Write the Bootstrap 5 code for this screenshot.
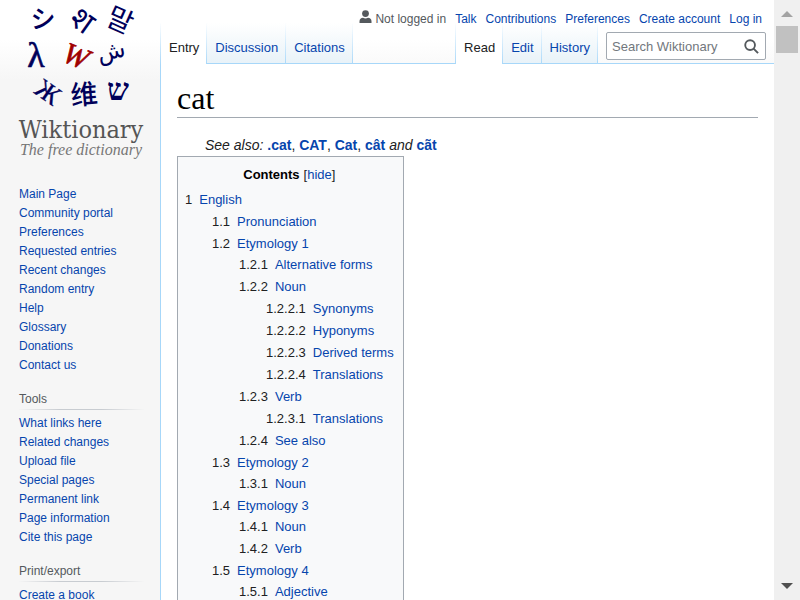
<!DOCTYPE html>
<html lang="en">
<head>
<meta charset="utf-8">
<meta name="viewport" content="width=device-width, initial-scale=1">
<title>cat - Wiktionary</title>
<link href="https://cdn.jsdelivr.net/npm/bootstrap@5.3.0/dist/css/bootstrap.min.css" rel="stylesheet">
<style>
body{font-family:"Liberation Sans",Arial,sans-serif;font-size:14px;line-height:22px;color:#202122;background:#f6f6f6}
a{color:#0645ad;text-decoration:none}
a:hover{text-decoration:underline}
ul{list-style:none;margin:0;padding:0}
.page-area{background:linear-gradient(#fff 40px,#f6f6f6 80px) top/100% 80px no-repeat}
.side{width:160px;font-size:12px;line-height:19px}
.side .logo-link{display:block;height:160px}
.side nav{padding:0 16px 0 19px}
.side .first-nav{margin-top:25px}
.side h2{font-size:12px;line-height:19px;color:#54595d;margin:15px 0 4px;border-bottom:1px solid;border-image:linear-gradient(to right,rgba(200,204,209,0),#c8ccd1 33%,#c8ccd1 66%,rgba(200,204,209,0)) 1}
.personal{font-size:12px;line-height:14px;height:23px;padding:12px 12px 0 0;gap:9px;color:#54595d}
.tabs{height:41px;font-size:13px;line-height:16px;border-left:1px solid;border-image:linear-gradient(#fff,#a7d7f9) 1}
.tabs li{border-right:1px solid;border-image:linear-gradient(#fff,#a7d7f9) 1;background:linear-gradient(#fff,#e8f2f8);padding:17px 7px 0 8px}
.tabs li.current{background:#fff}
.tabs li.current a{color:#202122}
.tabs li:not(.current),.tabs .fill{box-shadow:inset 0 -1px #a7d7f9}
.tabs .fill-mid{border-right:1px solid;border-image:linear-gradient(#fff,#a7d7f9) 1}
.search{width:160px;height:28px;margin:9px 8px 0;border:1px solid #a2a9b1;border-radius:2px;background:#fff}
.search input{font-size:13px;line-height:16px;padding:2px 0 0 5px;color:#202122;min-width:0}
.search input::placeholder{color:#72777d;opacity:1}
.search button{width:28px}
.content{background:#fff;border-left:1px solid #a7d7f9;padding:16px 16px 0}
.content h1{font-family:"Liberation Serif",Georgia,serif;font-size:32px;line-height:36px;color:#000;border-bottom:1px solid #a2a9b1;padding-bottom:1px;margin:0 0 17px}
.see{padding-left:28px;line-height:21px}
.contents-box{width:max-content;border:1px solid #a2a9b1;background:#f8f9fa;font-size:13px;padding:7px 9px 0 7px}
.contents-box h2{font-size:13px;line-height:22px;color:#000;margin:0}
.contents-box .tree{margin-top:3px}
.tree ul{padding-left:27px}
.tree ul ul{margin-top:-1px}
.tree ul ul ul{margin-top:0}
.tree span{margin-right:7px}
.scroller{width:26px;background:#f0f0f0}
.scroller .thumb{height:27px;margin:0 2px;background:#c1c1c1}
</style>
<script src="https://cdn.jsdelivr.net/npm/bootstrap@5.3.0/dist/js/bootstrap.bundle.min.js"></script>
</head>
<body class="d-flex vh-100 overflow-hidden">
<div class="page-area d-flex flex-grow-1 overflow-hidden">
  <aside class="side flex-shrink-0">
    <a class="logo-link" href="#" aria-label="Wiktionary, the free dictionary">
      <svg width="160" height="160" viewBox="0 0 160 160" text-anchor="middle" fill="#00005a" overflow="visible">
        <g font-family="Noto Sans CJK JP, sans-serif" font-weight="500">
          <text x="0" y="9" font-size="25" transform="translate(43 19)">シ</text>
          <text x="0" y="10" font-size="32" font-family="Noto Sans, sans-serif" font-weight="400" transform="translate(82 21) rotate(35)">श</text>
          <text x="0" y="10" font-size="28" font-family="Noto Sans CJK KR, sans-serif" font-weight="400" transform="translate(120 20) rotate(24)">말</text>
          <text x="0" y="10" font-size="27" font-family="Noto Sans CJK SC, sans-serif" transform="translate(84 94) rotate(-5)">维</text>
        </g>
        <g font-family="Liberation Serif, serif">
          <text x="0" y="11" font-size="36" stroke="#00005a" stroke-width=".6" transform="translate(36 56)">λ</text>
          <text x="0" y="10" font-size="30" font-style="italic" fill="#a00000" stroke="#a00000" stroke-width=".7" transform="translate(76 56) rotate(22)">W</text>
          <text x="0" y="9" font-size="27" stroke="#00005a" stroke-width=".3" transform="translate(48 92) rotate(35)">Ж</text>
          <text x="118" y="100" font-size="31" font-weight="700">ש</text>
        </g>
        <text x="0" y="4" font-size="23" font-family="DejaVu Sans, sans-serif" transform="translate(112 55) rotate(-12)">ش</text>
        <text x="81" y="138" font-size="25" font-family="DejaVu Serif Condensed, DejaVu Serif, serif" fill="#555">Wiktionary</text>
        <text x="81" y="155" font-size="16" font-style="italic" font-family="Liberation Serif, serif" fill="#777">The free dictionary</text>
      </svg>
    </a>
    <nav class="first-nav" aria-label="Navigation"><ul>
      <li><a href="#">Main Page</a></li><li><a href="#">Community portal</a></li><li><a href="#">Preferences</a></li><li><a href="#">Requested entries</a></li><li><a href="#">Recent changes</a></li><li><a href="#">Random entry</a></li><li><a href="#">Help</a></li><li><a href="#">Glossary</a></li><li><a href="#">Donations</a></li><li><a href="#">Contact us</a></li>
    </ul></nav>
    <nav aria-labelledby="tools"><h2 id="tools" class="fw-normal">Tools</h2><ul>
      <li><a href="#">What links here</a></li><li><a href="#">Related changes</a></li><li><a href="#">Upload file</a></li><li><a href="#">Special pages</a></li><li><a href="#">Permanent link</a></li><li><a href="#">Page information</a></li><li><a href="#">Cite this page</a></li>
    </ul></nav>
    <nav aria-labelledby="print"><h2 id="print" class="fw-normal">Print/export</h2><ul><li><a href="#">Create a book</a></li></ul></nav>
  </aside>
  <div class="d-flex flex-column flex-grow-1 overflow-hidden">
    <header>
      <ul class="personal d-flex justify-content-end text-nowrap">
        <li class="d-flex"><svg width="16" height="14" viewBox="0 0 16 14" fill="#54595d" aria-hidden="true" overflow="visible"><circle cx="6.500" cy="1.600" r="3.400"/><path d="M.5 11V9.200C.5 7 2 5.800 4 5.800c1.500 1 3.500 1 5 0 2 0 3.500 1.200 3.500 3.400V11z"/></svg>Not logged in</li>
        <li><a href="#">Talk</a></li><li><a href="#">Contributions</a></li><li><a href="#">Preferences</a></li><li><a href="#">Create account</a></li><li><a href="#">Log in</a></li>
      </ul>
      <div class="tabs d-flex text-nowrap">
        <ul class="d-flex"><li class="current"><a href="#">Entry</a></li><li><a href="#">Discussion</a></li><li><a href="#">Citations</a></li></ul>
        <div class="fill fill-mid flex-grow-1"></div>
        <ul class="d-flex"><li class="current"><a href="#">Read</a></li><li><a href="#">Edit</a></li><li><a href="#">History</a></li></ul>
        <div class="fill">
          <form class="search d-flex">
            <input class="form-control border-0 bg-transparent shadow-none" type="search" placeholder="Search Wiktionary" aria-label="Search Wiktionary">
            <button class="btn border-0 p-0 d-flex align-items-center justify-content-center flex-shrink-0" type="button" aria-label="Search"><svg width="15" height="15" viewBox="0 0 16 16" fill="none" stroke="#54595d" stroke-width="2"><circle cx="6.500" cy="6.500" r="5.200"/><path d="M10.200 10.200 15 15"/></svg></button>
          </form>
        </div>
      </div>
    </header>
    <main class="content flex-grow-1 overflow-hidden">
      <h1 class="fw-normal">cat</h1>
      <div class="see"><i>See also:</i> <a class="fw-bold" href="#">.cat</a>, <a class="fw-bold" href="#">CAT</a>, <a class="fw-bold" href="#">Cat</a>, <a class="fw-bold" href="#">cât</a> <i>and</i> <a class="fw-bold" href="#">cãt</a></div>
      <nav class="contents-box" aria-labelledby="toc">
        <div class="d-flex justify-content-center gap-1"><h2 id="toc" class="fw-bold">Contents</h2><div>[<a href="#">hide</a>]</div></div>
        <ul class="tree ps-0">
          <li><span>1</span><a href="#">English</a>
            <ul>
              <li><span>1.1</span><a href="#">Pronunciation</a></li>
              <li><span>1.2</span><a href="#">Etymology 1</a>
                <ul>
                  <li><span>1.2.1</span><a href="#">Alternative forms</a></li>
                  <li><span>1.2.2</span><a href="#">Noun</a>
                    <ul>
                      <li><span>1.2.2.1</span><a href="#">Synonyms</a></li>
                      <li><span>1.2.2.2</span><a href="#">Hyponyms</a></li>
                      <li><span>1.2.2.3</span><a href="#">Derived terms</a></li>
                      <li><span>1.2.2.4</span><a href="#">Translations</a></li>
                    </ul></li>
                  <li><span>1.2.3</span><a href="#">Verb</a>
                    <ul><li><span>1.2.3.1</span><a href="#">Translations</a></li></ul></li>
                  <li><span>1.2.4</span><a href="#">See also</a></li>
                </ul></li>
              <li><span>1.3</span><a href="#">Etymology 2</a>
                <ul><li><span>1.3.1</span><a href="#">Noun</a></li></ul></li>
              <li><span>1.4</span><a href="#">Etymology 3</a>
                <ul><li><span>1.4.1</span><a href="#">Noun</a></li><li><span>1.4.2</span><a href="#">Verb</a></li></ul></li>
              <li><span>1.5</span><a href="#">Etymology 4</a>
                <ul><li><span>1.5.1</span><a href="#">Adjective</a></li></ul></li>
            </ul></li>
        </ul>
      </nav>
    </main>
  </div>
</div>
<div class="scroller d-flex flex-column flex-shrink-0" aria-hidden="true">
  <svg width="26" height="26" viewBox="0 0 26 26"><path d="M7 17h12l-6-6z" fill="#a3a3a3"/></svg>
  <div class="thumb"></div>
  <svg class="mt-auto" width="26" height="26" viewBox="0 0 26 26"><path d="M7 9h12l-6 6z" fill="#505050"/></svg>
</div>
</body>
</html>
